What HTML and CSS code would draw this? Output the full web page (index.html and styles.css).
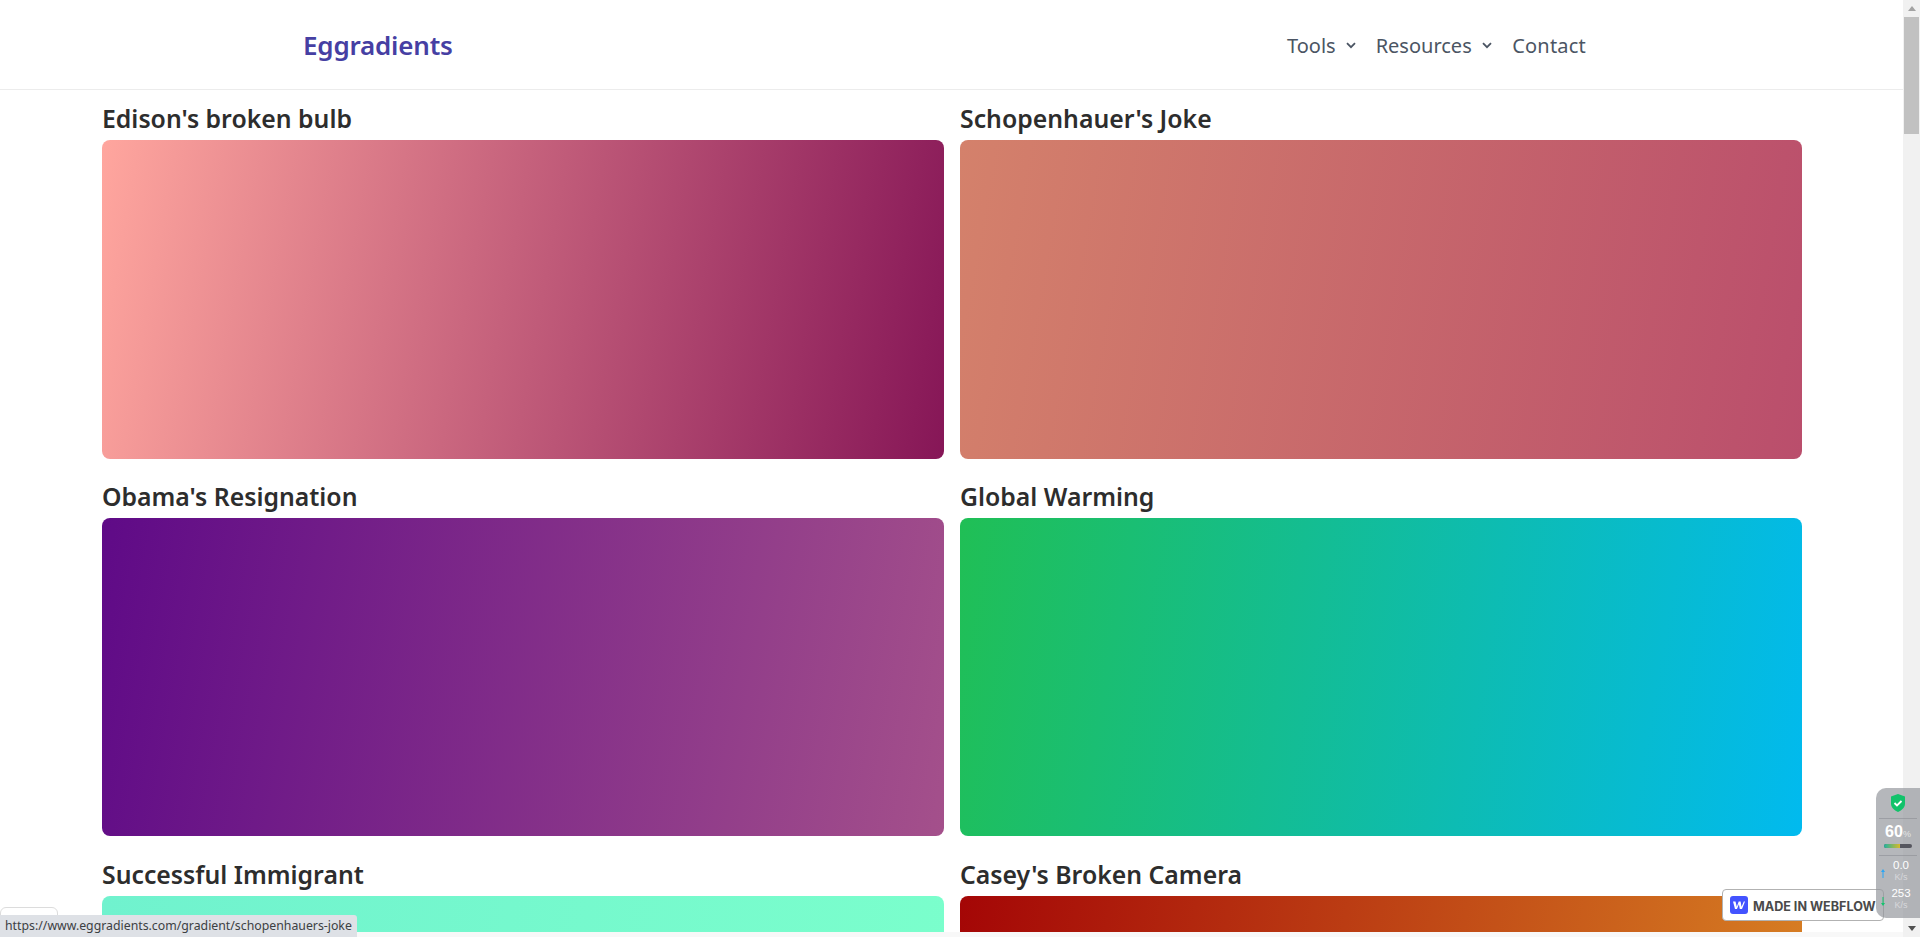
FILE: index.html
```html
<!DOCTYPE html>
<html lang="en">
<head>
<meta charset="utf-8">
<title>Eggradients</title>
<link rel="stylesheet" href="styles.css">
</head>
<body>
<div class="viewport">
  <div class="page">
    <header class="navbar">
      <a class="brand">Eggradients</a>
      <nav class="menu">
        <a class="menu-item">Tools <svg class="chev" viewBox="0 0 10 7"><path d="M1 1.200l4 4 4-4"/></svg></a>
        <a class="menu-item">Resources <svg class="chev" viewBox="0 0 10 7"><path d="M1 1.200l4 4 4-4"/></svg></a>
        <a class="menu-item contact">Contact</a>
      </nav>
    </header>
    <main class="grid">
      <section class="card"><h2>Edison's broken bulb</h2><div class="swatch g1"></div></section>
      <section class="card"><h2>Schopenhauer's Joke</h2><div class="swatch g2"></div></section>
      <section class="card"><h2>Obama's Resignation</h2><div class="swatch g3"></div></section>
      <section class="card"><h2>Global Warming</h2><div class="swatch g4"></div></section>
      <section class="card"><h2>Successful Immigrant</h2><div class="swatch g5"></div></section>
      <section class="card"><h2>Casey's Broken Camera</h2><div class="swatch g6"></div></section>
    </main>
  </div>
  <aside class="scrollbar">
    <svg class="arrow" viewBox="0 0 8 5"><path d="M4 0l4 5H0z"/></svg>
    <div class="thumb"></div>
    <svg class="arrow arrow-down" viewBox="0 0 8 5"><path d="M0 0h8L4 5z"/></svg>
  </aside>
  <div class="bottom-strip"></div>

  <div class="stub"></div>
  <div class="status">https://www.eggradients.com/gradient/schopenhauers-joke</div>

  <a class="webflow">
    <span class="wf-logo"><svg viewBox="0 0 18 18"><path d="M3 5.500h2.500l1.300 5.200 1.900-5.200h1.900l.9 5.200 2.300-5.200H15l-3 7.500H9.800l-.9-4.700L7 13H5z"/></svg></span>
    <span class="wf-text">MADE IN WEBFLOW</span>
  </a>

  <div class="meter">
    <svg class="shield" viewBox="0 0 14 18"><path class="shield-body" d="M7 0l7 2.500v7c0 4-3 6.800-7 8.500-4-1.700-7-4.500-7-8.500v-7z"/><path class="shield-tick" d="M3.500 9l2.500 2.500 4.500-4.500"/></svg>
    <div class="meter-line"></div>
    <div class="pct">60<small>%</small></div>
    <div class="bar"><span class="bar-fill"></span></div>
    <div class="meter-line lower"></div>
    <div class="speed first"><svg class="sp-arrow up" viewBox="0 0 4 9"><path d="M2 0l2 3H2.500v6h-1V3H0z"/></svg><div class="sp-val">0.0<small>K/s</small></div></div>
    <div class="speed"><svg class="sp-arrow down" viewBox="0 0 4 9"><path d="M2 9l2-3H2.500V0h-1v6H0z"/></svg><div class="sp-val">253<small>K/s</small></div></div>
  </div>
</div>
</body>
</html>
```
FILE: styles.css
```css
* { box-sizing: border-box; }
html, body { margin: 0; height: 100%; overflow: hidden; background: #fff; }
body { font-family: "Noto Sans", "Open Sans", sans-serif; }

.viewport {
  position: relative;
  height: 937px;
  display: grid;
  grid-template-columns: 1fr 17px;
  grid-template-rows: 932px 5px;
  overflow: hidden;
}

.page { overflow: hidden; }

.navbar {
  height: 90px;
  border-bottom: 1px solid #ececec;
  display: flex;
  align-items: center;
  padding: 0 0 0 303px;
}
.brand { font-size: 26px; font-weight: 600; color: #463fa3; letter-spacing: -0.2px; }
.menu { margin-left: auto; margin-right: 317px; margin-top: 2px; display: flex; gap: 20px; font-size: 20px; color: #4b5563; }
.menu-item { display: flex; align-items: center; gap: 10px; }
.contact { margin-left: 0.500px; letter-spacing: 0.200px; }
.chev { width: 10px; height: 7px; margin-top: -1px; fill: none; stroke: #4b5563; stroke-width: 1.800; }

.grid {
  display: grid;
  grid-template-columns: 842px 842px;
  column-gap: 16px;
  row-gap: 23.400px;
  padding: 14px 0 0 102px;
}
.card h2 { margin: 0; height: 36px; line-height: 29px; font-size: 24.800px; font-weight: 600; color: #2d2d2d; white-space: nowrap; }
.swatch { height: 318.500px; border-radius: 8px; }
.g1 { background: linear-gradient(100deg, #ffa69e, #861657); }
.g2 { background: linear-gradient(100deg, #d4816b, #ba4e6c); }
.g3 { background: linear-gradient(100deg, #5f0a87, #a4508b); }
.g4 { background: linear-gradient(100deg, #20bf55, #01baef); }
.g5 { background: linear-gradient(100deg, #70f2ce, #7bffcc); }
.g6 { background: linear-gradient(100deg, #a40606, #d98324); }

.scrollbar {
  grid-row: 1 / 3;
  grid-column: 2;
  background: #f1f1f1;
  display: flex;
  flex-direction: column;
  align-items: center;
}
.arrow { width: 8px; height: 5px; margin-top: 6px; fill: #a3a3a3; }
.thumb { width: 15px; height: 117px; margin-top: 6px; background: #c1c1c1; }
.arrow-down { margin-top: auto; margin-bottom: 6px; fill: #505050; }
.bottom-strip { grid-column: 1; grid-row: 2; background: #f8f8f8; }

.stub {
  position: absolute; left: 0; top: 907px; width: 58px; height: 30px;
  background: #fff; border: 1px solid #dcdcdc; border-radius: 6px 6px 0 0;
}
.status {
  position: absolute; left: 0; bottom: 0; height: 22px; width: 357px;
  padding: 0 0 0 5px;
  background: #dee1e6; border-radius: 0 3px 0 0;
  font: 12.300px/22px "Noto Sans", sans-serif;
  color: #3c4043; white-space: nowrap;
}

.webflow {
  position: absolute; left: 1722px; top: 889px; width: 162px; height: 32px;
  background: #fff; border: 1px solid #b2b2b2; border-radius: 4px;
  display: flex; align-items: center; gap: 5px; padding-left: 7px;
}
.wf-logo { width: 18px; height: 18px; background: #4353ff; border-radius: 3px; display: flex; flex: none; }
.wf-logo svg { width: 18px; height: 18px; fill: #fff; }
.wf-text { margin-top: 5px; font: 700 12.600px/1 "Inter", "Liberation Sans", sans-serif; color: #4a4a4a; white-space: nowrap; }

.meter {
  position: absolute; left: 1876px; top: 788px; width: 44px; height: 130px;
  background: rgba(150, 152, 158, .7);
  border-radius: 10px 0 0 10px;
  display: flex; flex-direction: column; align-items: center;
  color: #fff;
  font-family: "Liberation Sans", sans-serif;
}
.shield { width: 14px; height: 18px; margin-top: 6px; flex: none; }
.shield-body { fill: #12c26a; }
.shield-tick { fill: none; stroke: #fff; stroke-width: 1.800; }
.meter-line { width: 38px; height: 1px; margin-top: 6px; flex: none; background: rgba(140,142,148,.6); }
.pct { font-size: 16px; font-weight: 700; line-height: 18px; margin-top: 4px; }
.pct small { font-size: 9px; font-weight: 400; color: #e4e4e4; }
.bar { width: 28px; height: 4px; margin-top: 1px; flex: none; background: #55565e; border-radius: 2px; overflow: hidden; display: flex; }
.bar-fill { width: 16px; background: linear-gradient(90deg, #22b3a0, #d8b92a); }
.lower { margin-top: 7px; }
.speed { position: relative; width: 100%; margin-top: 4px; height: 24px; flex: none; }
.speed.first { margin-top: 3px; }
.sp-arrow { position: absolute; left: 5px; top: 10px; width: 4px; height: 9px; }
.up { fill: #2aa6f5; }
.down { fill: #14c46e; }
.sp-val { font-size: 11.500px; line-height: 13px; text-align: center; padding-left: 6px; }
.sp-val small { display: block; font-size: 9px; line-height: 11px; color: #d8d8dc; }
```
